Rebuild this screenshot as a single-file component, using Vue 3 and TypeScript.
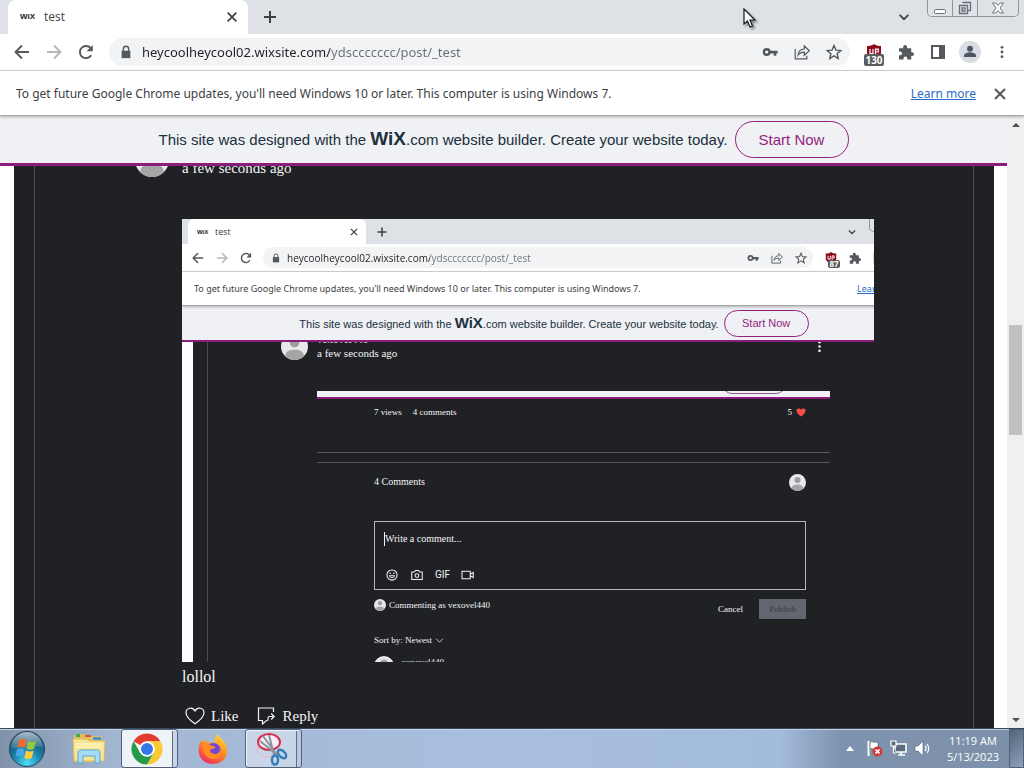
<script setup lang="ts">
interface Action {
  icon: string
  label: string
}

const url = 'heycoolheycool02.wixsite.com/ydsccccccc/post/_test'
const notice =
  "To get future Google Chrome updates, you'll need Windows 10 or later. This computer is using Windows 7."

const navigation: Action[] = [
  { icon: 'back', label: 'Back' },
  { icon: 'forward', label: 'Forward' },
  { icon: 'reload', label: 'Reload' },
]
const addressActions: Action[] = [
  { icon: 'key', label: 'Saved passwords' },
  { icon: 'share', label: 'Share this page' },
  { icon: 'star', label: 'Bookmark this tab' },
]
const attachments: Action[] = [
  { icon: 'smile', label: 'Add emoji' },
  { icon: 'camera', label: 'Add photo' },
  { icon: 'gif', label: 'Add GIF' },
  { icon: 'video', label: 'Add video' },
]
</script>

<template>
  <div class="desktop">
    <svg class="sprite" aria-hidden="true">
      <symbol id="back" viewBox="0 0 16 16"><path d="M15 8H2M8 1.5 1.5 8 8 14.5" fill="none" stroke="currentColor" stroke-width="1.9" /></symbol>
      <symbol id="forward" viewBox="0 0 16 16"><path d="M1 8h13M8 1.5 14.5 8 8 14.5" fill="none" stroke="currentColor" stroke-width="1.9" /></symbol>
      <symbol id="reload" viewBox="0 0 16 16"><path d="M13.2 11.3A6.1 6.1 0 1 1 12.6 4" fill="none" stroke="currentColor" stroke-width="1.9" /><path d="M14.8 1v6.2H8.6z" fill="currentColor" /></symbol>
      <symbol id="lock" viewBox="0 0 16 16"><path d="M3 6.5h10V15H3z" fill="currentColor" /><path d="M5 7V4.5a3 3 0 0 1 6 0V7" fill="none" stroke="currentColor" stroke-width="1.6" /></symbol>
      <symbol id="key" viewBox="0 0 16 16"><circle cx="4.7" cy="8" r="2.8" fill="none" stroke="currentColor" stroke-width="2.4" /><path d="M8 6.8h7.6v2.7h-1.3v2.2h-2.6V9.5H8z" fill="currentColor" /></symbol>
      <symbol id="share" viewBox="0 0 16 16"><path d="M1.2 5v9.8h11.6v-3M4 11.2c.3-4 2.6-6 6.3-6.2V2l5 4.7-5 4.6V8.2C7.5 8.2 5.5 9 4 11.2z" fill="none" stroke="currentColor" stroke-width="1.2" /></symbol>
      <symbol id="star" viewBox="0 0 16 16"><path d="m8 1.6 1.9 4.5 4.9.4-3.7 3.2 1.1 4.8L8 11.9l-4.2 2.6 1.1-4.8L1.2 6.5l4.9-.4z" fill="none" stroke="currentColor" stroke-width="1.4" /></symbol>
      <symbol id="puzzle" viewBox="0 0 16 16"><path d="M1 4.200h4.200V3a1.900 1.900 0 0 1 3.800 0v1.200h4.200v4h.9a1.900 1.900 0 0 1 0 3.800h-.9v3.500H9.300v-1.100a1.900 1.900 0 0 0-3.800 0v1.100H1v-4.200h1.100a1.900 1.900 0 0 0 0-3.800H1z" fill="currentColor" /></symbol>
      <symbol id="panel" viewBox="0 0 16 16"><path d="M1 1h14v14H1zM3 3v10h6V3z" fill="currentColor" fill-rule="evenodd" /></symbol>
      <symbol id="profile" viewBox="0 0 22 22"><circle cx="11" cy="11" r="11" fill="#dadce4" /><circle cx="11" cy="7.700" r="2.900" fill="#4c5564" /><path d="M5 16v-1.500c0-2.300 4-3.300 6-3.300s6 1 6 3.300V16z" fill="#4c5564" /></symbol>
      <symbol id="dots" viewBox="0 0 16 16"><circle cx="8" cy="2.700" r="1.600" fill="currentColor" /><circle cx="8" cy="8" r="1.600" fill="currentColor" /><circle cx="8" cy="13.300" r="1.600" fill="currentColor" /></symbol>
      <symbol id="cross" viewBox="0 0 16 16"><path d="m3 3 10 10M13 3 3 13" stroke="currentColor" stroke-width="2" /></symbol>
      <symbol id="plus" viewBox="0 0 16 16"><path d="M8 2v12M2 8h12" stroke="currentColor" stroke-width="2" /></symbol>
      <symbol id="chevron" viewBox="0 0 16 16"><path d="m3 5.500 5 5 5-5" fill="none" stroke="currentColor" stroke-width="2" /></symbol>
      <symbol id="caret" viewBox="0 0 16 16"><path d="m2 5 6 6 6-6" fill="none" stroke="currentColor" stroke-width="1.400" /></symbol>
      <symbol id="shield" viewBox="0 0 16 16"><path d="M1 2c3 0 5-.5 7-2 2 1.500 4 2 7 2v7c0 3-4 5.500-7 7-3-1.500-7-4-7-7z" fill="#8d0b1d" /><path d="M4 5v4.500h3V5M9.500 10.500V5.200h2.800V8H10" fill="none" stroke="#fff" stroke-width="1.200" /></symbol>
      <symbol id="avatar" viewBox="0 0 34 34"><circle cx="17" cy="17" r="17" fill="#e8e8ea" /><circle cx="17" cy="12" r="6" fill="#9c9c9f" /><path d="M5 29c1-6 5-8 12-8s11 2 12 8a17 17 0 0 1-24 0z" fill="#a5a5a8" /></symbol>
      <symbol id="smile" viewBox="0 0 16 16"><g fill="none" stroke="currentColor" stroke-width="1.400"><circle cx="8" cy="8" r="6.800" /><path d="M4.700 9c.8 3.400 5.800 3.400 6.600 0z" /></g><circle cx="5.500" cy="5.800" r="1" fill="currentColor" /><circle cx="10.500" cy="5.800" r="1" fill="currentColor" /></symbol>
      <symbol id="camera" viewBox="0 0 16 16"><path d="M1 4h3.500L6 2h4l1.500 2H15v10H1z" fill="none" stroke="currentColor" stroke-width="1.400" /><circle cx="8" cy="8.700" r="2.500" fill="none" stroke="currentColor" stroke-width="1.400" /></symbol>
      <symbol id="video" viewBox="0 0 18 16"><path d="M1 3h11v10H1zM12 7l4-2.500v7L12 9" fill="none" stroke="currentColor" stroke-width="1.400" /></symbol>
      <symbol id="heart" viewBox="0 0 20 18"><path d="M10 16.800C6 14 1 10 1 5.700 1 1 7.500-.8 10 4c2.500-4.800 9-3 9 1.700 0 4.300-5 8.300-9 11.100z" /></symbol>
      <symbol id="reply" viewBox="0 0 18 18"><path d="M16.500 5V1h-15v12.500h4V17l4-3.500h1M17 9.500h-4.500c-1 0-1.500.5-1.500 1.500v2.500M14.200 6.500l3 3-3 3" fill="none" stroke="currentColor" stroke-width="1.200" /></symbol>
    </svg>

    <header class="tabs">
      <div class="tab">
        <b class="favicon">WiX</b><span class="title">test</span>
        <button class="plain" aria-label="Close tab"><svg class="i14"><use href="#cross" /></svg></button>
      </div>
      <button class="plain add" aria-label="New tab"><svg class="i16"><use href="#plus" /></svg></button>
      <button class="plain search-tabs" aria-label="Search tabs"><svg class="i14"><use href="#chevron" /></svg></button>
      <div class="window-buttons">
        <button aria-label="Minimize"><svg width="14" height="14"><rect x="1.500" y="8.500" width="11" height="4" rx="1" fill="#fff" stroke="#6b7078" /></svg></button>
        <button aria-label="Restore"><svg width="14" height="14"><path d="M4.500 1.500h8v8h-3M1.500 4.500h8v8h-8zM4 7h3v3H4z" fill="none" stroke="#6b7078" stroke-width="1.300" /></svg></button>
        <button class="wide" aria-label="Close"><svg width="14" height="14"><path d="M1.500 2h3.300L7 4.500 9.200 2h3.300L9 7l3.500 5H9.200L7 9.500 4.800 12H1.500L5 7z" fill="#fff" stroke="#6b7078" /></svg></button>
      </div>
      <svg class="pointer" viewBox="0 0 14 20"><path d="M1 1v15l3.500-3 2.500 6 2.500-1-2.500-6h5z" fill="#fff" stroke="#15171a" stroke-width="1.200" /></svg>
    </header>

    <div class="toolbar">
      <button v-for="a in navigation" :key="a.icon" class="plain tool" :class="a.icon" :aria-label="a.label"><svg class="i16"><use :href="'#' + a.icon" /></svg></button>
      <div class="omnibox">
        <svg class="i14 lock"><use href="#lock" /></svg>
        <input class="url" type="text" :value="url" aria-label="Address" />
        <button v-for="a in addressActions" :key="a.icon" class="plain tool" :aria-label="a.label"><svg class="i16"><use :href="'#' + a.icon" /></svg></button>
      </div>
      <button class="plain tool blocker" aria-label="Content blocker"><svg class="i16"><use href="#shield" /></svg><span class="count">130</span></button>
      <button class="plain tool" aria-label="Extensions"><svg class="i16"><use href="#puzzle" /></svg></button>
      <button class="plain tool" aria-label="Side panel"><svg class="i16"><use href="#panel" /></svg></button>
      <button class="plain tool" aria-label="Profile"><svg class="i22"><use href="#profile" /></svg></button>
      <button class="plain tool" aria-label="Menu"><svg class="i14"><use href="#dots" /></svg></button>
    </div>

    <div class="infobar">
      <span>{{ notice }}</span>
      <a href="#">Learn more</a>
      <button class="plain dismiss" aria-label="Dismiss"><svg class="i16"><use href="#cross" /></svg></button>
    </div>

    <div class="viewport">
      <main class="page">
        <div class="banner">
          <p>This site was designed with the <b>WiX</b>.com website builder. Create your website today.</p>
          <a class="start" href="#">Start Now</a>
        </div>
        <div class="site">
          <div class="panel">
            <article class="comment">
              <div class="byline">
                <svg class="avatar"><use href="#avatar" /></svg>
                <span>a few seconds ago</span>
              </div>
              <div class="body">
                <div class="shot">
                  <div class="mini">
                    <div class="tabs">
                      <div class="tab">
                        <b class="favicon">WiX</b><span class="title">test</span>
                        <button class="plain" aria-label="Close tab"><svg class="i14"><use href="#cross" /></svg></button>
                      </div>
                      <button class="plain add" aria-label="New tab"><svg class="i16"><use href="#plus" /></svg></button>
                      <button class="plain search-tabs" aria-label="Search tabs"><svg class="i14"><use href="#chevron" /></svg></button>
                      <div class="window-buttons"></div>
                    </div>
                    <div class="toolbar">
                      <button v-for="a in navigation" :key="a.icon" class="plain tool" :class="a.icon" :aria-label="a.label"><svg class="i16"><use :href="'#' + a.icon" /></svg></button>
                      <div class="omnibox">
                        <svg class="i14 lock"><use href="#lock" /></svg>
                        <input class="url" type="text" :value="url" aria-label="Address" />
                        <button v-for="a in addressActions" :key="a.icon" class="plain tool" :aria-label="a.label"><svg class="i16"><use :href="'#' + a.icon" /></svg></button>
                      </div>
                      <button class="plain tool blocker" aria-label="Content blocker"><svg class="i16"><use href="#shield" /></svg><span class="count">87</span></button>
                      <button class="plain tool" aria-label="Extensions"><svg class="i16"><use href="#puzzle" /></svg></button>
                      <button class="plain tool side" aria-label="Side panel"><svg class="i16"><use href="#panel" /></svg></button>
                    </div>
                    <div class="infobar">
                      <span>{{ notice }}</span>
                      <a href="#">Learn more</a>
                    </div>
                    <div class="banner">
                      <p>This site was designed with the <b>WiX</b>.com website builder. Create your website today.</p>
                      <a class="start" href="#">Start Now</a>
                    </div>
                    <div class="thread">
                      <div class="byline">
                        <svg class="avatar"><use href="#avatar" /></svg>
                        <div class="who"><span>vexovel440</span><span>a few seconds ago</span></div>
                        <button class="plain more" aria-label="More actions"><svg><use href="#dots" /></svg></button>
                      </div>
                      <div class="inset">
                        <div class="strip"><span class="stub"></span></div>
                        <div class="stats"><span>7 views</span><span>4 comments</span><span class="likes">5 <svg class="love"><use href="#heart" /></svg></span></div>
                        <div class="rules"></div>
                        <div class="form">
                          <div class="heading"><span>4 Comments</span><svg class="face"><use href="#avatar" /></svg></div>
                          <div class="editor">
                            <textarea rows="1" placeholder="Write a comment..." aria-label="Write a comment"></textarea>
                            <div class="attach">
                              <button v-for="a in attachments" :key="a.icon" class="plain" :aria-label="a.label">
                                <span v-if="a.icon === 'gif'">GIF</span>
                                <svg v-else><use :href="'#' + a.icon" /></svg>
                              </button>
                            </div>
                          </div>
                          <div class="submit">
                            <span class="as"><svg><use href="#avatar" /></svg>Commenting as vexovel440</span>
                            <button class="plain cancel">Cancel</button>
                            <button class="publish" disabled>Publish</button>
                          </div>
                          <button class="plain sort">Sort by: Newest <svg><use href="#caret" /></svg></button>
                          <div class="next"><svg><use href="#avatar" /></svg><span>vexovel440</span></div>
                        </div>
                      </div>
                    </div>
                  </div>
                </div>
                <p class="text">lollol</p>
                <div class="actions">
                  <button class="plain"><svg class="like"><use href="#heart" /></svg>Like</button>
                  <button class="plain"><svg class="reply"><use href="#reply" /></svg>Reply</button>
                </div>
              </div>
            </article>
          </div>
        </div>
      </main>
      <div class="scrollbar"><i class="up"></i><i class="thumb"></i><i class="down"></i></div>
    </div>

    <footer class="taskbar">
      <button class="plain orb" aria-label="Start">
        <svg width="38" height="38" viewBox="0 0 38 38">
          <defs>
            <radialGradient id="orb" cx=".5" cy=".9" r=".85"><stop offset="0" stop-color="#4fe0f5" /><stop offset=".45" stop-color="#1b84b0" /><stop offset="1" stop-color="#17435f" /></radialGradient>
            <linearGradient id="gloss" x2="0" y2="1"><stop stop-color="#fff" stop-opacity=".65" /><stop offset="1" stop-color="#fff" stop-opacity=".1" /></linearGradient>
          </defs>
          <circle cx="19" cy="19" r="17.500" fill="url(#orb)" stroke="#28475f" />
          <path d="M3 18a16 16 0 0 1 32 0c-9-4-20 2-32 0z" fill="url(#gloss)" />
          <path d="M11 10c3-1.700 5-1.500 7.500.2L17 18c-2.500-1.500-4.800-1.600-7.500-.3z" fill="#ee6a30" />
          <path d="M20 11c2.500 1.500 5 1.600 8 0l-2 7.700c-2.500 1.400-5 1.400-7.500 0z" fill="#94c83d" />
          <path d="M9 19.300c3-1.400 5-1.200 7.600.3L15 27c-2.500-1.500-4.800-1.600-7.500-.3z" fill="#48a7e8" />
          <path d="M18 20.400c2.500 1.400 5 1.400 7.700 0l-2 7.500c-2.700 1.500-5 1.300-7.400 0z" fill="#fccd3a" />
        </svg>
      </button>
      <button class="plain app" aria-label="File Explorer">
        <svg width="34" height="32" viewBox="0 0 34 32">
          <path d="M2 3l2-2h8l2 2h16v26H2z" fill="#e2c15c" /><path d="M4 1h4v3H4z" fill="#3faa49" /><path d="M13 2h6v2h-6z" fill="#d9533b" /><path d="M21 4h8v3h-8z" fill="#4e8fd5" />
          <path d="M1 6h14l2 2h16l-1 20H2z" fill="#f7e596" stroke="#dab850" stroke-width=".8" />
          <path d="M3 11h28M3 14h28" stroke="#fff4bd" stroke-width="1.500" />
          <path d="M6 30V20c0-2 1-3 3-3h16c2 0 3 1 3 3v10h-5v-7H11v7z" fill="#a8dcf4" stroke="#58a5d0" />
        </svg>
      </button>
      <button class="plain app open active" aria-label="Google Chrome">
        <svg width="32" height="32" viewBox="0 0 32 32">
          <path d="M16 16 2.600 8.200A15.500 15.500 0 0 1 29.400 8.200H16z" fill="#e33b2e" />
          <path d="M16 16V8.200h13.400A15.500 15.500 0 0 1 16 31.500l6.700-11.600z" fill="#fcc934" />
          <path d="M16 16l6.700 3.900L16 31.500A15.500 15.500 0 0 1 2.600 8.200l6.700 11.700z" fill="#249a4a" />
          <circle cx="16" cy="16" r="7.800" fill="#fff" /><circle cx="16" cy="16" r="6" fill="#3478e8" />
        </svg>
      </button>
      <button class="plain app" aria-label="Firefox">
        <svg width="32" height="32" viewBox="0 0 32 32">
          <defs><linearGradient id="fox" x1=".85" y1="0" x2=".3" y2="1"><stop stop-color="#ffe340" /><stop offset=".5" stop-color="#ff8a20" /><stop offset="1" stop-color="#f02c62" /></linearGradient></defs>
          <path d="M21 1c1 4 5 5 7 9 5 9 1 21-12 21C6 31 0 23 2 14c0-3 2-6 3-7l1 3 3-4 1 4c3-1 6 0 7 0 0-4 2-7 4-9z" fill="url(#fox)" />
          <circle cx="16.500" cy="17" r="7" fill="#7545d8" /><path d="M6 12c4-2 7 0 10 1 3 0 3 3-1 3-4 1-1 5 3 5 3 0 5-2 5-5 3 6-2 10-7 10-6 0-11-6-10-14z" fill="#ff8d22" />
        </svg>
      </button>
      <button class="plain app open" aria-label="Snipping Tool">
        <svg width="34" height="34" viewBox="0 0 34 34" fill="none">
          <ellipse cx="14" cy="18" rx="11" ry="7" stroke="#edb3bd" /><ellipse cx="15" cy="10" rx="11" ry="8" fill="#f5eef5" stroke="#d72d51" stroke-width="2" />
          <path d="m9 4 14 19M15 3l5 20M6 9l16 13" stroke="#8b929c" stroke-width="2" />
          <ellipse cx="21" cy="28" rx="3" ry="4.500" stroke="#337eb8" stroke-width="2.500" /><ellipse cx="28" cy="22" rx="3" ry="5" transform="rotate(-45 28 22)" stroke="#337eb8" stroke-width="2.500" />
        </svg>
      </button>
      <div class="tray">
        <button class="plain" aria-label="Show hidden icons"><svg width="8" height="5"><path d="M0 5 4 0l4 5z" fill="#fff" /></svg></button>
        <button class="plain" aria-label="Action Center"><svg width="17" height="17"><path d="M2.500 1v15" stroke="#fff" stroke-width="2" /><path d="M4 2c3-1 4 1 8 0v7c-4 1-5-1-8 0z" fill="#fff" stroke="#4b5668" stroke-width=".6" /><circle cx="11.500" cy="11.500" r="5" fill="#d33b30" /><path d="m9.500 9.500 4 4m0-4-4 4" stroke="#fff" stroke-width="1.700" /></svg></button>
        <button class="plain" aria-label="Network"><svg width="17" height="17" fill="none"><path d="M5 4h11v8H5zM8 15h7M11 12v3" fill="#5a6b80" stroke="#fff" stroke-width="1.600" /><path d="M1 1h5v5H1zM3.500 6v7H6" fill="#5a6b80" stroke="#fff" stroke-width="1.200" /></svg></button>
        <button class="plain" aria-label="Volume"><svg width="17" height="17"><path d="M1 6h3l5-5v15l-5-5H1z" fill="#fff" stroke="#536074" stroke-width=".6" /><path d="M11 6c1.300 1.500 1.300 3.500 0 5M13 4c2.300 3 2.300 6 0 9" fill="none" stroke="#fff" stroke-width="1.200" /></svg></button>
      </div>
      <time class="clock"><span>11:19 AM</span><span>5/13/2023</span></time>
      <button class="peek" aria-label="Show desktop"></button>
    </footer>
  </div>
</template>

<style>
html,
body {
  margin: 0;
}
</style>

<style scoped>
.desktop,
.desktop * {
  box-sizing: border-box;
}
.desktop {
  display: flex;
  flex-direction: column;
  height: 100vh;
  overflow: hidden;
  font: 12px/16px "Open Sans", "Noto Sans", sans-serif;
  color: #3c4043;
  background: #fff;
}
.sprite {
  position: absolute;
  width: 0;
  height: 0;
}
svg {
  display: block;
  flex: none;
}
p {
  margin: 0;
}
.plain {
  display: flex;
  align-items: center;
  justify-content: center;
  padding: 0;
  border: 0;
  background: none;
  color: inherit;
  font: inherit;
}
.i14 { width: 14px; height: 14px; }
.i16 { width: 16px; height: 16px; }
.i22 { width: 22px; height: 22px; }

.tabs {
  position: relative;
  display: flex;
  align-items: center;
  flex: none;
  height: 34px;
  padding: 0 5px 0 8px;
  background: #dee1e6;
}
.tab {
  display: flex;
  align-items: center;
  width: 240px;
  height: 34px;
  padding: 0 9px 0 12px;
  border-radius: 8px 8px 0 0;
  background: #fff;
}
.favicon {
  width: 24px;
  font: bold 8px/12px "Liberation Sans", sans-serif;
  color: #202124;
}
.title { flex: 1; }
.add { width: 44px; }
.search-tabs { margin-left: auto; margin-right: 16px; }
.window-buttons {
  display: flex;
  align-self: flex-start;
  height: 17px;
  border: 1px solid #8f949c;
  border-top: 0;
  border-radius: 0 0 5px 5px;
  overflow: hidden;
}
.window-buttons button {
  display: flex;
  align-items: center;
  justify-content: center;
  width: 25px;
  padding: 0;
  border: 0;
  border-right: 1px solid #8f949c;
  background: #dfe2e7;
}
.window-buttons .wide { width: 40px; border-right: 0; }
.pointer {
  position: absolute;
  left: 743px;
  top: 8px;
  width: 14px;
  height: 20px;
  filter: drop-shadow(2px 2px 1px #0006);
}

.toolbar {
  display: flex;
  align-items: center;
  flex: none;
  height: 37px;
  padding: 0 6px;
  border-bottom: 1px solid #d5d6d8;
  background: #fff;
  color: #55585c;
}
.tool {
  width: 32px;
  height: 28px;
  flex: none;
}
.forward { color: #b4b6b9; }
.omnibox {
  display: flex;
  align-items: center;
  flex: 1;
  min-width: 0;
  height: 28px;
  margin: 0 8px 0 7px;
  padding-left: 10px;
  border-radius: 14px;
  background: #f1f3f4;
}
.url {
  flex: 1;
  min-width: 0;
  margin-left: 9px;
  padding: 0;
  border: 0;
  outline: 0;
  font: 13px/20px "Noto Sans", "Open Sans", sans-serif;
  color: #5f6368;
  background: linear-gradient(90deg, #202124 188px, #6b6f74 188px) text;
  -webkit-text-fill-color: transparent;
}
.blocker { position: relative; }
.count {
  position: absolute;
  left: 6px;
  bottom: 0;
  width: 20px;
  border-radius: 2px;
  background: #5a5b5d;
  color: #fff;
  font: bold 10px/12px "Open Sans", sans-serif;
}
.infobar {
  position: relative;
  display: flex;
  align-items: center;
  flex: none;
  height: 45px;
  padding: 1px 16px 0;
  border-bottom: 1px solid #a3a5a7;
  background: #fff;
  box-shadow: 0 1px 3px #0004;
  z-index: 1;
  font-family: "Noto Sans", "Open Sans", sans-serif;
  white-space: nowrap;
}
.infobar a {
  margin-left: auto;
  margin-right: 16px;
  color: #2a6cc4;
  text-decoration: underline;
}
.dismiss { color: #55585c; }

.viewport {
  display: flex;
  flex: 1;
  min-height: 0;
}
.page {
  display: flex;
  flex-direction: column;
  flex: 1;
  min-width: 0;
}
.banner {
  display: flex;
  align-items: center;
  justify-content: center;
  flex: none;
  gap: 7px;
  height: 50px;
  border-bottom: 3px solid #8a1c7c;
  background: #eff1f4;
  color: #20303c;
  font: 15px/20px "Liberation Sans", sans-serif;
  white-space: nowrap;
}
.banner b { font-size: 19px; }
.start {
  display: flex;
  align-items: center;
  justify-content: center;
  width: 114px;
  height: 37px;
  border: 1px solid #951f7d;
  border-radius: 19px;
  color: #951f7d;
  text-decoration: none;
}
.site {
  flex: 1;
  min-height: 0;
  overflow: hidden;
  padding: 0 13px 0 14px;
  background: #fff;
}
.panel {
  height: 100%;
  padding: 0 20px;
  overflow: hidden;
  background: #202125;
  color: #f4f4f5;
  font-family: "Liberation Serif", serif;
}
.comment {
  display: flow-root;
  height: 100%;
  padding: 0 99px 0 100px;
  border: solid #4b4c50;
  border-width: 0 1px;
}
.byline {
  display: flex;
  align-items: flex-end;
  gap: 13px;
  height: 34px;
  margin-top: -23px;
  font-size: 15px;
  line-height: 18px;
}
.avatar { width: 34px; height: 34px; }
.body { margin: 42px 0 0 47px; }
.text {
  margin-top: 5px;
  font-size: 16px;
  line-height: 20px;
}
.actions {
  display: flex;
  gap: 18px;
  margin: 19px 0 0 3px;
  font-size: 15px;
  line-height: 20px;
}
.actions svg { stroke: currentColor; fill: none; }
.like { width: 20px; height: 18px; margin-right: 6px; stroke-width: 1.2; }
.reply { width: 18px; height: 18px; margin-right: 8px; }

.shot {
  height: 443px;
  overflow: hidden;
  background: linear-gradient(90deg, #fdfdff 11px, #202125 11px);
}
.mini {
  width: 759px;
  font-size: 9px;
  line-height: 12px;
}
.mini .tabs {
  height: 25px;
  padding: 0 0 0 6px;
  color: #3c4043;
  font: 9px/12px "Open Sans", sans-serif;
}
.mini .tab { width: 178px; height: 25px; padding: 0 7px 0 9px; border-radius: 6px 6px 0 0; }
.mini .favicon { width: 18px; font-size: 6px; }
.mini .i14 { width: 10px; height: 10px; }
.mini .i16 { width: 12px; height: 12px; }
.mini .add { width: 32px; }
.mini .search-tabs { margin-right: 12px; }
.mini .window-buttons { width: 72px; height: 13px; }
.mini .toolbar { height: 28px; padding: 0 28px 0 4px; }
.mini .tool { width: 24px; height: 22px; }
.mini .omnibox { height: 21px; margin: 0 6px 0 5px; padding-left: 8px; }
.mini .url {
  margin-left: 6px;
  font: 10px/16px "Open Sans", sans-serif;
  background-image: linear-gradient(90deg, #202124 143px, #6b6f74 143px);
}
.mini .side { margin-right: 22px; }
.mini .count { left: 9px; bottom: 1px; width: 12px; font-size: 8px; line-height: 8px; }
.mini .infobar {
  height: 34px;
  padding: 0 12px;
  color: #3c4043;
  font: 9px/12px "Noto Sans", "Open Sans", sans-serif;
}
.mini .infobar a { margin-right: 23px; }
.mini .banner { gap: 5px; height: 36px; padding-right: 15px; border-width: 2px; font-size: 11px; }
.mini .banner b { font-size: 15px; }
.mini .start { width: 85px; height: 27px; }
.thread {
  position: relative;
  height: 320px;
  margin-left: 11px;
  padding-left: 25px;
  overflow: hidden;
}
.thread::before {
  content: "";
  position: absolute;
  top: 0;
  bottom: 0;
  left: 14px;
  border-left: 1px solid #4b4c50;
}
.thread .byline {
  gap: 9px;
  width: 545px;
  height: 27px;
  margin: -9px 0 0 63px;
  font-size: 11px;
  line-height: 14px;
}
.thread .avatar { width: 27px; height: 27px; }
.who { display: flex; flex-direction: column; }
.more { margin-left: auto; align-self: center; }
.more svg { width: 13px; height: 13px; }
.inset { width: 513px; margin: 31px 0 0 99px; }
.strip {
  position: relative;
  height: 8px;
  overflow: hidden;
  border-bottom: 2px solid #8a1c7c;
  background: #f3eff8;
}
.stub {
  position: absolute;
  right: 44px;
  bottom: 3px;
  width: 64px;
  height: 20px;
  border: 1px solid #8a5a8a;
  border-radius: 10px;
}
.stats {
  display: flex;
  gap: 11px;
  padding: 7px 24px 0 57px;
  font-size: 9px;
}
.likes { display: flex; align-items: center; gap: 4px; margin-left: auto; }
.love { width: 10px; height: 9px; fill: #ff4c48; }
.rules {
  height: 11px;
  margin-top: 34px;
  border: solid #56575b;
  border-width: 1px 0;
}
.form { padding: 0 24px 0 57px; }
.heading {
  display: flex;
  align-items: center;
  justify-content: space-between;
  height: 18px;
  margin-top: 10px;
  font-size: 10px;
  line-height: 14px;
}
.face { width: 17px; height: 17px; }
.editor {
  display: flex;
  flex-direction: column;
  justify-content: space-between;
  height: 69px;
  margin-top: 30px;
  padding: 10px 9px 8px;
  border: 1px solid #b5b6ba;
}
.editor textarea {
  height: 14px;
  padding: 0;
  border: 0;
  border-left: 1px solid #f4f4f5;
  outline: 0;
  resize: none;
  overflow: hidden;
  background: none;
  color: inherit;
  font: 10px/14px "Liberation Serif", serif;
}
.editor textarea::placeholder { color: #f4f4f5; opacity: 1; }
.attach { display: flex; gap: 11px; margin-left: 1px; }
.attach svg { width: 14px; height: 12px; }
.attach span { font: 10px/12px Roboto, sans-serif; }
.submit {
  display: flex;
  align-items: center;
  height: 20px;
  margin-top: 9px;
  font-size: 9px;
}
.as { display: flex; align-items: center; gap: 3px; align-self: flex-start; }
.as svg { width: 12px; height: 12px; }
.cancel { margin-left: auto; margin-right: 16px; }
.publish {
  width: 47px;
  height: 20px;
  padding: 0;
  border: 0;
  background: #62666f;
  color: #383c46;
  font: 9px/12px "Liberation Serif", serif;
}
.sort { margin-top: 15px; font-size: 9px; gap: 3px; }
.sort svg { width: 9px; height: 9px; }
.next { display: flex; gap: 8px; margin-top: 10px; font-size: 9px; }
.next svg { width: 20px; height: 20px; }

.scrollbar {
  display: flex;
  flex-direction: column;
  align-items: center;
  flex: none;
  width: 17px;
  padding: 7px 0 6px;
  background: #f0f0f0;
}
.up,
.down {
  border: 4px solid transparent;
  border-top: 0;
  border-bottom-color: #4d4f52;
}
.down { margin-top: auto; transform: rotate(180deg); }
.thumb { width: 13px; height: 110px; margin-top: 198px; background: #c1c1c1; }

.taskbar {
  display: flex;
  align-items: center;
  flex: none;
  height: 40px;
  padding-left: 8px;
  border-top: 1px solid #39475a;
  box-shadow: inset 0 1px #c6d3e3;
  background: linear-gradient(90deg, #7f92aa 0, #93a6bf 60px, #a3b7d3 120px, #a8bfdf 500px, #a3bbdc 780px, #7e93ae 840px, #7d90a9);
  color: #fff;
}
.app {
  width: 56px;
  height: 39px;
  margin-right: 4px;
}
.orb { margin-right: 15px; }
.open {
  width: 57px;
  margin-right: 7px;
  padding-right: 5px;
  border: 1px solid #4f6078;
  border-radius: 3px;
  background: linear-gradient(90deg, #d9e3f0aa calc(100% - 5px), #5d6d84 calc(100% - 5px), #5d6d84 calc(100% - 4px), #b9c9df 0);
  box-shadow: inset 1px 1px #eef4fb;
}
.active { background: linear-gradient(90deg, #eef3f8 calc(100% - 5px), #5d6d84 calc(100% - 5px), #5d6d84 calc(100% - 4px), #c9d6e7 0); }
.tray {
  display: flex;
  align-items: center;
  gap: 7px;
  margin-left: auto;
}
.tray button:first-child { margin-right: 5px; }
.clock {
  display: flex;
  flex-direction: column;
  align-items: center;
  margin: 0 10px 0 16px;
  font-size: 11px;
}
.peek {
  width: 15px;
  height: 39px;
  padding: 0;
  border: 1px solid #52617a;
  background: linear-gradient(135deg, #53647a, #8fa2ba);
}
</style>
